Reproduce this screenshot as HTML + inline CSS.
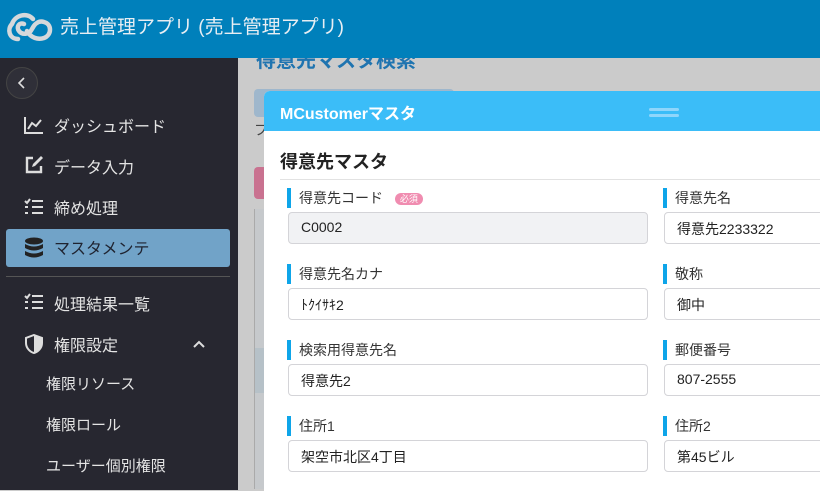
<!DOCTYPE html>
<html><head><meta charset="utf-8"><style>
*{box-sizing:border-box;margin:0;padding:0}
body{width:820px;height:490px;overflow:hidden;font-family:"Liberation Sans","Noto Sans CJK JP",sans-serif;background:#ccc;position:relative}
.hd{position:absolute;left:0;top:0;width:820px;height:58px;background:#0080bb;color:#e8eef3;font-size:19px;z-index:2}
.hd .t{position:absolute;left:60px;top:12px}
.sb{position:absolute;left:0;top:58px;width:238px;height:432px;background:#272730;color:#e4e4e4;font-size:16px}
.it{position:absolute;left:54px}
.sub{position:absolute;left:46px;font-size:15px}
.bg{position:absolute;left:238px;top:58px;width:582px;height:432px;background:#cbcbcb}
.modal{position:absolute;left:264px;top:91px;width:570px;height:400px;background:#fff;border-radius:6px 0 0 0;overflow:hidden}
.mh{height:40px;background:#3bbdf8;color:#fff;font-weight:bold;font-size:16px;padding:9px 0 0 16px}
.lbl{position:absolute;font-size:14px;color:#333;padding-left:12px;height:20px;line-height:20px}
.lbl:before{content:"";position:absolute;left:0;top:0;width:4px;height:20px;background:#0ea5e9}
.in{position:absolute;height:32px;border:1px solid #d4d4d8;border-radius:4px;font-size:14px;color:#222;padding:6px 12px;background:#fff}
</style></head><body>
<div class="hd">
<svg style="position:absolute;left:5px;top:9px" width="50" height="34" viewBox="0 0 50 34"><path d="M13 30 C4 30 2 20 7 15 C10 6 22 3 28 10 M22 22 C26 29 33 31 39 29 C47 26 47 15 39 13 C33 11 29 16 27 20 C24 26 17 26 14 22 C11 18 14 13 19 15" fill="none" stroke="#d5d8db" stroke-width="4.5" stroke-linecap="round"/></svg>
<div class="t">売上管理アプリ (売上管理アプリ)</div></div>
<div class="sb">
<div style="position:absolute;left:6px;top:9px;width:32px;height:32px;border-radius:50%;border:1px solid #444;background:#2f2f38"><svg width="30" height="30" viewBox="0 0 30 30"><path d="M17 10 L12 15 L17 20" fill="none" stroke="#ddd" stroke-width="1.6"/></svg></div>
<svg style="position:absolute;left:24px;top:58px" width="20" height="18" viewBox="0 0 20 18"><path d="M1 1 V17 H19 M4 13 L8 7 L12 10 L17 4" fill="none" stroke="#ddd" stroke-width="2"/></svg>
<div class="it" style="top:55px">ダッシュボード</div>
<svg style="position:absolute;left:24px;top:97px" width="20" height="20" viewBox="0 0 20 20"><path d="M9 3 H3 V17 H17 V11" fill="none" stroke="#ddd" stroke-width="2.4"/><path d="M8 12 L9 9 L17 1 L19 3 L11 11 Z" fill="#ddd"/></svg>
<div class="it" style="top:96px">データ入力</div>
<svg style="position:absolute;left:24px;top:140px" width="20" height="18" viewBox="0 0 20 18"><path d="M1 3 L3 5 L6 1 M1 9 h3 M1 15 h3 M8 3 H19 M8 9 H19 M8 15 H19" fill="none" stroke="#ddd" stroke-width="2"/></svg>
<div class="it" style="top:137px">締め処理</div>
<div style="position:absolute;left:6px;top:171px;width:224px;height:38px;background:#71a3c8;border-radius:3px"></div>
<svg style="position:absolute;left:24px;top:179px" width="20" height="22" viewBox="0 0 20 22"><ellipse cx="10" cy="4" rx="9" ry="3.5" fill="#222"/><path d="M1 7 Q10 12 19 7 V11 Q10 16 1 11Z M1 14 Q10 19 19 14 V18 Q10 23 1 18Z" fill="#222"/></svg>
<div class="it" style="top:177px;color:#1f2330">マスタメンテ</div>
<div style="position:absolute;left:6px;top:218px;width:224px;height:1px;background:#555"></div>
<svg style="position:absolute;left:24px;top:235px" width="20" height="18" viewBox="0 0 20 18"><path d="M1 3 L3 5 L6 1 M1 9 h3 M1 15 h3 M8 3 H19 M8 9 H19 M8 15 H19" fill="none" stroke="#ddd" stroke-width="2"/></svg>
<div class="it" style="top:233px">処理結果一覧</div>
<svg style="position:absolute;left:25px;top:276px" width="18" height="20" viewBox="0 0 18 20"><path d="M9 1 L17 4 V9 C17 14 13 18 9 19 C5 18 1 14 1 9 V4Z" fill="none" stroke="#ddd" stroke-width="2"/><path d="M9 1 L17 4 V9 C17 14 13 18 9 19Z" fill="#ddd"/></svg>
<div class="it" style="top:274px">権限設定</div>
<svg style="position:absolute;left:192px;top:281px" width="14" height="10" viewBox="0 0 14 10"><path d="M2 8 L7 3 L12 8" fill="none" stroke="#ddd" stroke-width="2"/></svg>
<div class="sub" style="top:315px">権限リソース</div>
<div class="sub" style="top:356px">権限ロール</div>
<div class="sub" style="top:397px">ユーザー個別権限</div>
</div>
<div class="bg">
<div style="position:absolute;left:18px;top:-14px;font-size:20px;font-weight:bold;color:#1f74b0">得意先マスタ検索</div>
<div style="position:absolute;left:16px;top:31px;width:200px;height:28px;background:#9fb7cc;border-radius:4px"></div>
<div style="position:absolute;left:16px;top:62px;font-size:14px;color:#444">フ</div>
<div style="position:absolute;left:16px;top:109px;width:20px;height:32px;background:#c97290;border-radius:4px"></div>
<div style="position:absolute;left:16px;top:151px;width:20px;height:280px;border-left:1px solid #aaa;background:#c6c9cc"></div>
<div style="position:absolute;left:17px;top:290px;width:20px;height:45px;background:#b6c1c8"></div>
</div>
<div class="modal">
<div class="mh">MCustomerマスタ</div>
<div style="position:absolute;left:385px;top:17px;width:30px;height:3px;background:#8fd6fb;border-radius:2px"></div>
<div style="position:absolute;left:385px;top:23px;width:30px;height:3px;background:#8fd6fb;border-radius:2px"></div>
<div style="position:absolute;left:16px;top:57px;font-size:18px;font-weight:bold;color:#222">得意先マスタ</div>
<div style="position:absolute;left:16px;top:88px;width:560px;height:1px;background:#e2e2e2"></div>
<div class="lbl" style="left:23px;top:97px">得意先コード <span style="display:inline-block;margin-left:8px;font-size:9px;background:#f08cb0;color:#fff;border-radius:6px;padding:0 5px;line-height:12px;vertical-align:1px">必須</span></div>
<div class="in" style="left:24px;top:121px;width:360px;background:#f1f2f4">C0002</div>
<div class="lbl" style="left:399px;top:97px">得意先名</div>
<div class="in" style="left:400px;top:121px;width:200px">得意先2233322</div>
<div class="lbl" style="left:23px;top:173px">得意先名カナ</div>
<div class="in" style="left:24px;top:197px;width:360px">ﾄｸｲｻｷ2</div>
<div class="lbl" style="left:399px;top:173px">敬称</div>
<div class="in" style="left:400px;top:197px;width:200px">御中</div>
<div class="lbl" style="left:23px;top:249px">検索用得意先名</div>
<div class="in" style="left:24px;top:273px;width:360px">得意先2</div>
<div class="lbl" style="left:399px;top:249px">郵便番号</div>
<div class="in" style="left:400px;top:273px;width:200px">807-2555</div>
<div class="lbl" style="left:23px;top:325px">住所1</div>
<div class="in" style="left:24px;top:349px;width:360px">架空市北区4丁目</div>
<div class="lbl" style="left:399px;top:325px">住所2</div>
<div class="in" style="left:400px;top:349px;width:200px">第45ビル</div>
</div>
</body></html>
